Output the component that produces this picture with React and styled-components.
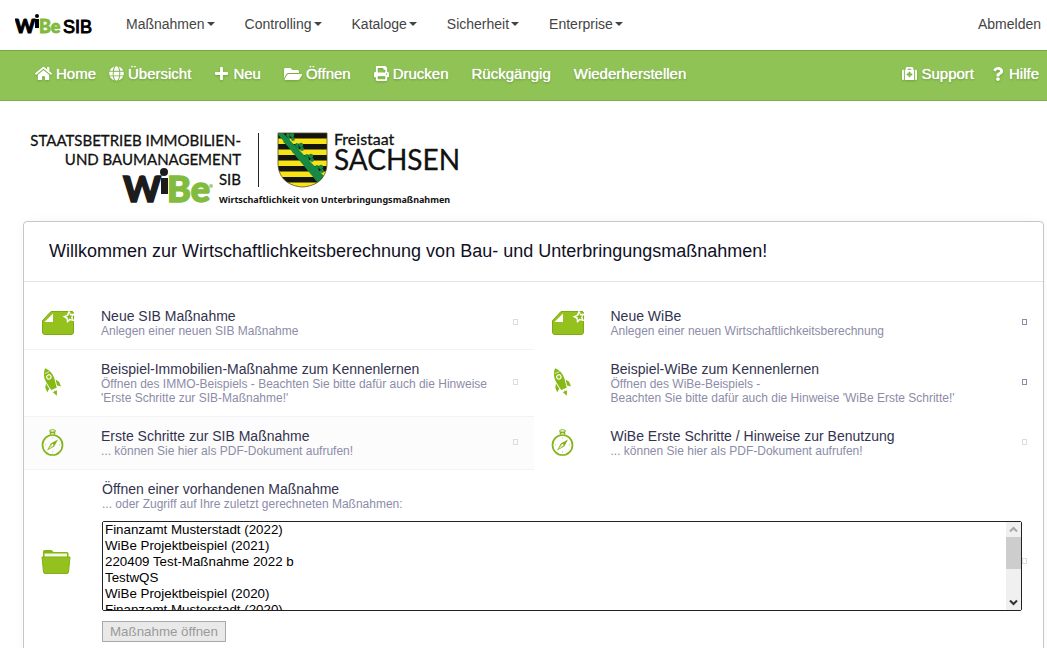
import React from "react";
import styled, { createGlobalStyle } from "styled-components";
import {
  FaHome,
  FaGlobe,
  FaPlus,
  FaFolderOpen,
  FaPrint,
  FaMedkit,
  FaQuestion,
} from "react-icons/fa";

const GlobalStyle = createGlobalStyle`
  *, *::before, *::after { box-sizing: border-box; }
  body {
    margin: 0;
    background: #fff;
    color: #444;
    font-family: "Liberation Sans", Arial, sans-serif;
    font-size: 14px;
  }
  h1, h2, p { margin: 0; font-weight: 400; }
`;

/* ---------- top navigation ---------- */

const TopBar = styled.header`
  display: flex;
  align-items: center;
  height: 50px;
  padding: 0 6px 2px 15px;
`;

const Brand = styled.a`
  display: block;
  width: 111px;
  height: 28px;
`;

const Menu = styled.nav`
  display: flex;
  gap: 30px;
  flex: 1;
`;

const MenuLink = styled.a`
  display: flex;
  align-items: center;
  gap: 2px;
  color: #444;
  line-height: 20px;
  text-decoration: none;
`;

const Caret = styled.span`
  border: 4px solid transparent;
  border-top-color: currentColor;
  border-bottom: 0;
`;

/* ---------- green toolbar ---------- */

const Toolbar = styled.nav`
  display: flex;
  align-items: center;
  justify-content: space-between;
  height: 51px;
  padding: 0 8px 4px 35px;
  background: #90c356;
  border-top: 1px solid #74aa3c;
  border-bottom: 1px solid #7cb043;
`;

const ToolGroup = styled.div`
  display: flex;
  align-items: center;
  gap: ${(p) => p.$gap}px;
`;

const Tool = styled.a`
  display: flex;
  align-items: center;
  gap: 4px;
  color: #fff;
  font-size: 15px;
  line-height: 20px;
  text-decoration: none;
  text-shadow: 0 0 1px #fff, 0 1px 2px #5c8f2a;

  svg {
    display: block;
    filter: drop-shadow(0 1px 1px #6fa338);
  }
`;

/* ---------- page body ---------- */

const Main = styled.main`
  padding: 24px 3px 0 23px;
`;

const Banner = styled.svg`
  display: block;
  width: 440px;
  height: 84px;
  margin-bottom: 12px;
`;

const Panel = styled.section`
  border: 1px solid #c6c6c6;
  border-radius: 4px;
  box-shadow: 0 0 12px rgba(0, 0, 0, 0.04);
`;

const PanelHead = styled.div`
  padding: 18px 25px 19px;
  border-bottom: 1px solid #e2e2ea;

  h1 {
    color: #10101f;
    font-size: 18px;
    line-height: 22px;
  }
`;

const PanelBody = styled.div`
  display: grid;
  grid-template-columns: 1fr 1fr;
  padding-top: 15px;
`;

const Entry = styled.div`
  display: grid;
  grid-template-columns: 60px 1fr auto;
  align-items: center;
  grid-column: ${(p) => (p.$wide ? "1 / -1" : "auto")};
  padding: 12px 16px 11px 17px;
  background: ${(p) => (p.$shaded ? "#fcfcfc" : "transparent")};
  border-bottom: 1px solid ${(p) => (p.$ruled ? "#f3f3f5" : "transparent")};
  color: inherit;
  text-decoration: none;
`;

const EntryIcon = styled.svg`
  display: block;
  margin-bottom: 2px;
`;

const EntryTitle = styled.h2`
  color: #33334f;
  font-size: 14px;
  line-height: 15px;
`;

const EntryText = styled.p`
  color: #8c8ca8;
  font-size: 12px;
  line-height: 14px;
`;

const Marker = styled.span`
  width: 5px;
  height: 6px;
  margin-bottom: 3px;
  border: 1px solid ${(p) => (p.$dark ? "#8c8ca8" : "#dcdce2")};
`;

/* ---------- project list ---------- */

const OpenForm = styled.form`
  display: flex;
  flex-direction: column;
  align-items: flex-start;
  gap: 10px;
  padding-left: 1px;
`;

const ListFrame = styled.div`
  position: relative;
  width: 100%;
`;

const ProjectList = styled.select`
  display: block;
  width: 100%;
  height: 90px;
  padding: 0;
  background: #fff;
  border: 1px solid #222;
  border-radius: 2px;
  color: #000;
  font-family: inherit;
  outline: 0;
  scrollbar-width: none;

  option {
    height: 16px;
    min-height: 16px;
    padding: 0 2px 1px;
    line-height: 15px;
  }
`;

const ScrollTrack = styled.div`
  position: absolute;
  top: 1px;
  right: 1px;
  bottom: 1px;
  display: flex;
  flex-direction: column;
  justify-content: space-between;
  align-items: center;
  width: 15px;
  background: #f0f0f0;
  pointer-events: none;

  svg { display: block; }
`;

const ScrollThumb = styled.span`
  width: 15px;
  height: 32px;
  margin-bottom: 26px;
  background: #cdcdcd;
`;

const OpenButton = styled.button`
  height: 21px;
  padding: 0 7px;
  background: #e9e9e9;
  border: 1px solid #a8a8a8;
  border-radius: 0;
  color: #9a9a9a;
  font-family: inherit;
`;

/* ---------- drawings ---------- */

const BrandLogo = () => (
  <svg width="80" height="28" viewBox="0 0 80 28" role="img" aria-label="WiBe SIB">
    <g fontFamily="Lato, sans-serif" fontWeight="900">
      <text x="0" y="23" fontSize="19" stroke="#000" strokeWidth="1">W</text>
      <text x="24" y="23" fontSize="18" fill="#7fba3c" stroke="#7fba3c" strokeWidth="0.8">Be</text>
    </g>
    <rect x="20" y="9" width="4" height="9" />
    <circle cx="22" cy="6" r="2" />
    <text x="48" y="23" fontSize="18" fontFamily="Liberation Sans, sans-serif" stroke="#000" strokeWidth="1">SIB</text>
  </svg>
);

const CROWN_LEAVES = [
  [6, 3], [15, 13], [25, 24], [35, 35],
];

const SaxonyBanner = () => (
  <Banner viewBox="0 0 440 84" role="img" aria-label="Freistaat Sachsen">
    <g fontFamily="Lato, sans-serif" fill="#111" stroke="#111" strokeWidth="0.3">
      <text x="218" y="21" fontSize="15" textAnchor="end">STAATSBETRIEB IMMOBILIEN-</text>
      <text x="218" y="40" fontSize="15" textAnchor="end">UND BAUMANAGEMENT</text>
      <text x="218" y="60" fontSize="15" textAnchor="end">SIB</text>
      <text x="311" y="20" fontSize="16">Freistaat</text>
      <text x="311" y="45" fontSize="28">SACHSEN</text>
    </g>
    <text x="196" y="78" fontSize="9" fontWeight="700" fontFamily="Noto Sans, sans-serif" fill="#111">
      Wirtschaftlichkeit von Unterbringungsmaßnahmen
    </text>
    <g fontFamily="Lato, sans-serif" fontWeight="900">
      <text x="100" y="77" fontSize="36" fill="#1c1c1c" stroke="#1c1c1c" strokeWidth="1.500">W</text>
      <text x="144" y="77" fontSize="36" fill="#82bc3f" stroke="#82bc3f" strokeWidth="1.500">Be</text>
    </g>
    <rect x="138" y="53" width="7" height="16" fill="#1c1c1c" />
    <circle cx="141" cy="47" r="4" fill="#1c1c1c" />
    <circle cx="188" cy="61" r="2" fill="#a9d07c" />
    <rect x="235" y="8" width="1" height="54" fill="#222" />
    <clipPath id="shield">
      <path d="M0 0H49V30C49 44 40 53 24.500 54C9 53 0 44 0 30Z" />
    </clipPath>
    <g transform="translate(255 8)">
      <g clipPath="url(#shield)">
        <rect width="49" height="54" fill="#f7e316" />
        {[0, 11, 22, 33, 44].map((y) => (
          <rect key={y} y={y} width="49" height="5.500" fill="#15150f" />
        ))}
        <path d="M-2 -1L4 -1L46 43L40 50Z" fill="#168a45" />
        {CROWN_LEAVES.map(([x, y]) => (
          <g key={x} transform={`translate(${x} ${y})`} fill="#168a45">
            <path d="M-1 6L5 0L6 2L4 10Z" />
            <circle cx="4" cy="-1" r="1.900" />
            <circle cx="9" cy="3" r="1.900" />
            <circle cx="8" cy="-1" r="2.200" />
          </g>
        ))}
      </g>
      <path d="M0 0H49V30C49 44 40 53 24.500 54C9 53 0 44 0 30Z" fill="none" stroke="#55501c" strokeWidth="0.800" />
    </g>
  </Banner>
);

const NewFileIcon = () => (
  <EntryIcon width="34" height="26" viewBox="0 0 34 26" aria-hidden="true">
    <path d="M10 1.500H31Q32.500 1.500 32.500 3.500V22Q32.500 24.500 30 24.500H4Q1.500 24.500 1.500 22V10.500Z" fill="#95c11f" stroke="#7cab12" />
    <path d="M12 3.500V12H3.500Z" fill="#fff" />
    <path d="M28 0L29.800 4L34 3.600L31.400 7.100L33.400 11.200L29 10.200L26 13L25.400 8.800L21.600 6.600L25.800 5Z" fill="#fff" />
    <path d="M28.200 3L29.100 5.500L31.500 5.400L29.900 7.200L30.900 9.400L28.600 8.500L26.800 10L26.900 7.600L25 6.400L27.400 5.700Z" fill="#86b516" />
  </EntryIcon>
);

const RocketIcon = () => (
  <EntryIcon width="21" height="30" viewBox="0 0 21 30" aria-hidden="true">
    <g transform="rotate(-23 10 14)" fill="#86b816">
      <path d="M10 -1C13 2 15 6 14.500 12L13 21.500H7L5.500 12C5 6 7 2 10 -1Z" />
      <path d="M4.800 13.500L2.500 17V22L5.800 19.500ZM15.200 13.500L17.500 17V22L14.200 19.500Z" />
      <path d="M7.500 23.500L10 29L12.500 23.500L11 24.500L10 23L9 24.500Z" />
      <path d="M7.500 3.800H12.500" stroke="#e7f2cd" strokeWidth="0.800" />
      <circle cx="10" cy="8.500" r="2.200" fill="#95c11f" stroke="#fff" strokeWidth="1.100" />
    </g>
  </EntryIcon>
);

const CompassIcon = () => (
  <EntryIcon width="24" height="27" viewBox="0 0 24 27" aria-hidden="true">
    <g fill="none" stroke="#83b41a">
      <circle cx="11.500" cy="16" r="10" strokeWidth="1.700" />
      <path d="M9.500 5.500V3.500H13.500V5.500" strokeWidth="1.500" />
      <ellipse cx="11.500" cy="2" rx="3" ry="1.300" />
      <path d="M11.500 8.500V9.500M11.500 22.500V23.500M4 16H5M18 16H19" stroke="#b6d66a" />
    </g>
    <path d="M17 10.500L13.200 17.600L6 21.500L9.800 14.400Z" fill="#7fb012" />
    <circle cx="11.500" cy="16" r="1.100" fill="#fff" />
    <path d="M7.500 20L10.200 15.700L11.900 17.400Z" fill="#dcecb4" />
  </EntryIcon>
);

const FolderIcon = () => (
  <EntryIcon width="30" height="25" viewBox="0 0 30 25" aria-hidden="true">
    <path d="M2 9V2.500Q2 1 3.500 1H10.500L12.500 3H26Q27.500 3 27.500 4.500V9Z" fill="#86b516" />
    <path d="M3.500 4.500H26V9H3.500Z" fill="#f4f9e6" />
    <path d="M1 8H29L27.500 23Q27.300 24.500 26 24.500H4Q2.700 24.500 2.500 23Z" fill="#95c11f" stroke="#82b117" />
  </EntryIcon>
);

/* ---------- data ---------- */

const MENU = ["Maßnahmen", "Controlling", "Kataloge", "Sicherheit", "Enterprise"];

const ENTRIES = [
  {
    icon: NewFileIcon,
    title: "Neue SIB Maßnahme",
    lines: ["Anlegen einer neuen SIB Maßnahme"],
    ruled: true,
  },
  {
    icon: NewFileIcon,
    title: "Neue WiBe",
    lines: ["Anlegen einer neuen Wirtschaftlichkeitsberechnung"],
    dark: true,
  },
  {
    icon: RocketIcon,
    title: "Beispiel-Immobilien-Maßnahme zum Kennenlernen",
    lines: [
      "Öffnen des IMMO-Beispiels - Beachten Sie bitte dafür auch die Hinweise",
      "'Erste Schritte zur SIB-Maßnahme!'",
    ],
    ruled: true,
  },
  {
    icon: RocketIcon,
    title: "Beispiel-WiBe zum Kennenlernen",
    lines: [
      "Öffnen des WiBe-Beispiels -",
      "Beachten Sie bitte dafür auch die Hinweise 'WiBe Erste Schritte!'",
    ],
    dark: true,
  },
  {
    icon: CompassIcon,
    title: "Erste Schritte zur SIB Maßnahme",
    lines: ["... können Sie hier als PDF-Dokument aufrufen!"],
    ruled: true,
    shaded: true,
  },
  {
    icon: CompassIcon,
    title: "WiBe Erste Schritte / Hinweise zur Benutzung",
    lines: ["... können Sie hier als PDF-Dokument aufrufen!"],
  },
];

const PROJECTS = [
  "Finanzamt Musterstadt (2022)",
  "WiBe Projektbeispiel (2021)",
  "220409 Test-Maßnahme 2022 b",
  "TestwQS",
  "WiBe Projektbeispiel (2020)",
  "Finanzamt Musterstadt (2020)",
];

export default function App() {
  return (
    <>
      <GlobalStyle />
      <TopBar>
        <Brand href="#"><BrandLogo /></Brand>
        <Menu>
          {MENU.map((label) => (
            <MenuLink href="#" key={label}>{label}<Caret /></MenuLink>
          ))}
        </Menu>
        <MenuLink href="#">Abmelden</MenuLink>
      </TopBar>

      <Toolbar>
        <ToolGroup $gap={23}>
          <ToolGroup $gap={13}>
            <Tool href="#"><FaHome size={17} />Home</Tool>
            <Tool href="#"><FaGlobe size={15} />Übersicht</Tool>
          </ToolGroup>
          <Tool href="#"><FaPlus size={15} />Neu</Tool>
          <Tool href="#"><FaFolderOpen size={18} />Öffnen</Tool>
          <Tool href="#"><FaPrint size={15} />Drucken</Tool>
          <Tool href="#">Rückgängig</Tool>
          <Tool href="#">Wiederherstellen</Tool>
        </ToolGroup>
        <ToolGroup $gap={17}>
          <Tool href="#"><FaMedkit size={15} />Support</Tool>
          <Tool href="#"><FaQuestion size={14} />Hilfe</Tool>
        </ToolGroup>
      </Toolbar>

      <Main>
        <SaxonyBanner />
        <Panel>
          <PanelHead>
            <h1>Willkommen zur Wirtschaftlichkeitsberechnung von Bau- und Unterbringungsmaßnahmen!</h1>
          </PanelHead>
          <PanelBody>
            {ENTRIES.map(({ icon: Icon, title, lines, ruled, shaded, dark }) => (
              <Entry as="a" href="#" key={title} $ruled={ruled} $shaded={shaded}>
                <Icon />
                <div>
                  <EntryTitle>{title}</EntryTitle>
                  {lines.map((line) => (
                    <EntryText key={line}>{line}</EntryText>
                  ))}
                </div>
                <Marker $dark={dark} />
              </Entry>
            ))}
            <Entry $wide>
              <FolderIcon />
              <OpenForm>
                <label htmlFor="projects">
                  <EntryTitle>Öffnen einer vorhandenen Maßnahme</EntryTitle>
                  <EntryText>... oder Zugriff auf Ihre zuletzt gerechneten Maßnahmen:</EntryText>
                </label>
                <ListFrame>
                  <ProjectList id="projects" size={5}>
                    {PROJECTS.map((name) => (
                      <option key={name}>{name}</option>
                    ))}
                  </ProjectList>
                  <ScrollTrack>
                    <svg width="15" height="15" viewBox="0 0 15 15" aria-hidden="true">
                      <path d="M4 9.500L7.500 6L11 9.500" fill="none" stroke="#a8a8a8" strokeWidth="2" />
                    </svg>
                    <ScrollThumb />
                    <svg width="15" height="15" viewBox="0 0 15 15" aria-hidden="true">
                      <path d="M4 5.500L7.500 9L11 5.500" fill="none" stroke="#333" strokeWidth="2" />
                    </svg>
                  </ScrollTrack>
                </ListFrame>
                <OpenButton type="button" disabled>Maßnahme öffnen</OpenButton>
              </OpenForm>
              <Marker />
            </Entry>
          </PanelBody>
        </Panel>
      </Main>
    </>
  );
}
